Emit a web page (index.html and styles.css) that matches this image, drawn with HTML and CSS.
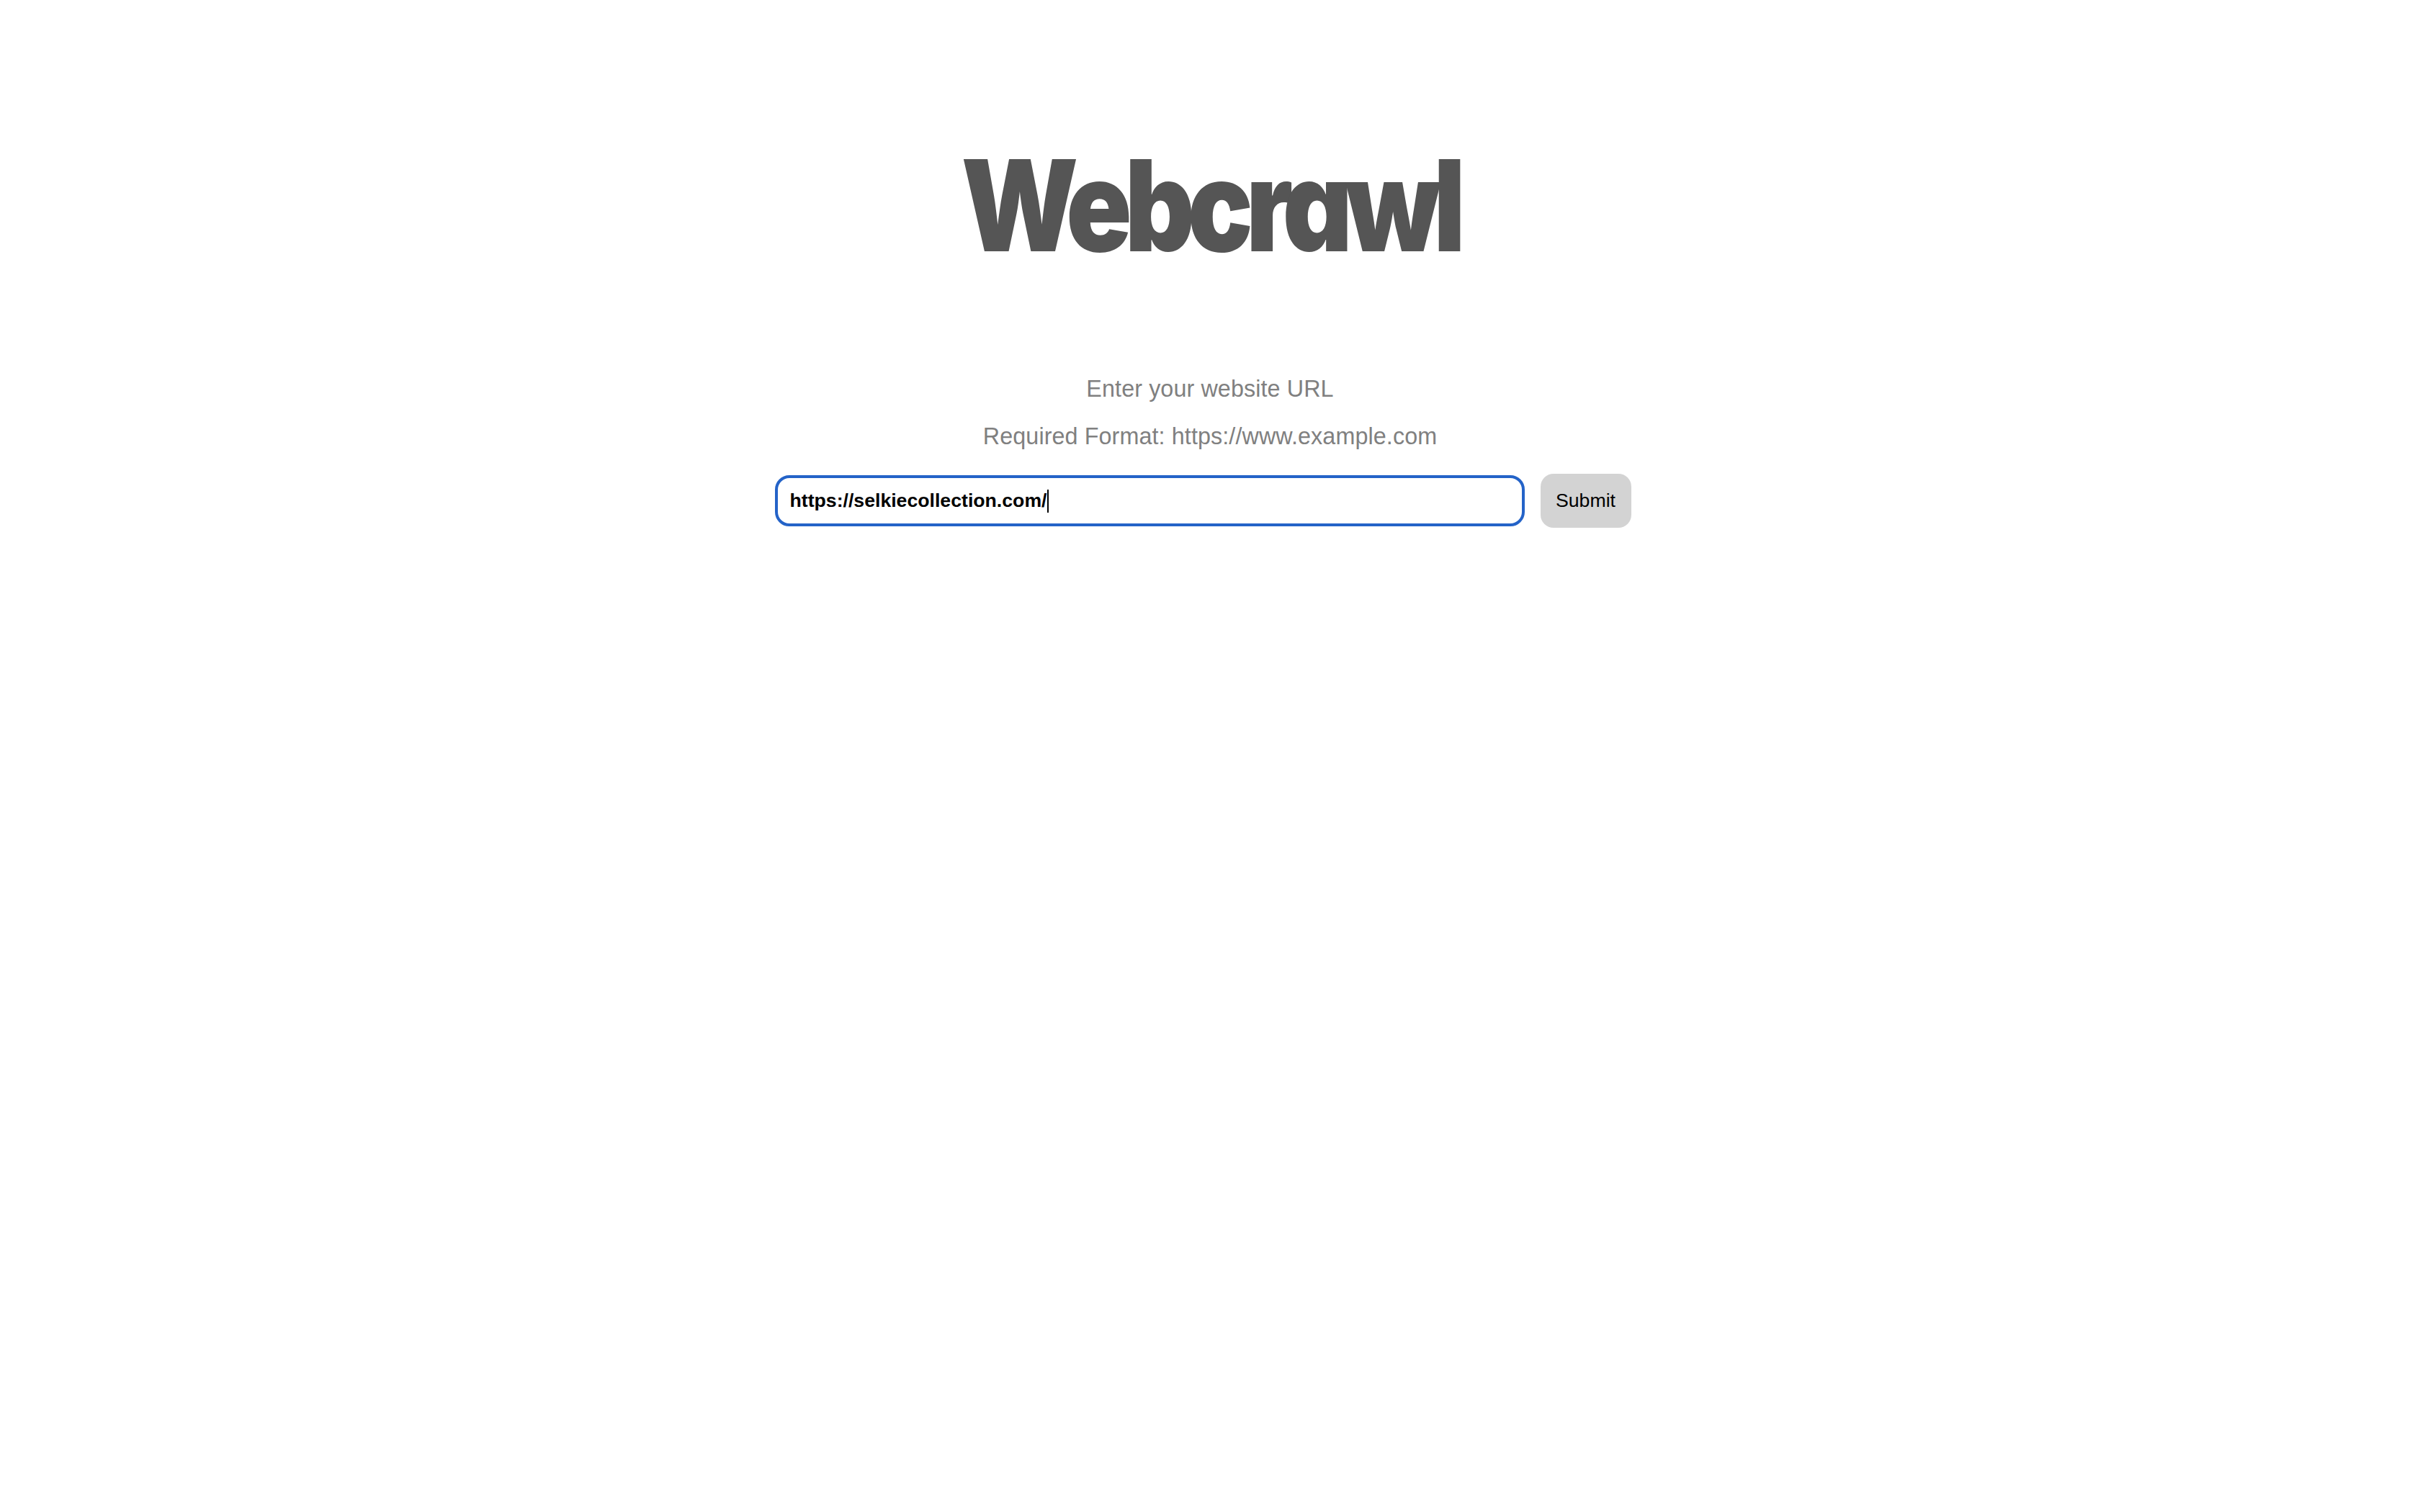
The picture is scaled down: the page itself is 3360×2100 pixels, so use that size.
FILE: index.html
```html
<!DOCTYPE html>
<html lang="en">
<head>
<meta charset="utf-8">
<title>Webcrawl</title>
<link rel="stylesheet" href="styles.css">
</head>
<body>
<main class="page">
  <h1 class="title">Webcrawl</h1>
  <p class="hint">Enter your website URL</p>
  <p class="hint hint-second">Required Format: https://www.example.com</p>
  <form class="url-form">
    <div class="url-field" role="textbox" aria-label="Website URL"><span class="url-text">https://selkiecollection.com/</span><span class="caret"></span></div>
    <button type="button" class="submit">Submit</button>
  </form>
</main>
</body>
</html>
```

FILE: styles.css
```css
html, body {
  margin: 0;
  padding: 0;
  background: #ffffff;
}

.page {
  display: flex;
  flex-direction: column;
  align-items: center;
  padding-top: 197px;
  font-family: "Liberation Sans", Arial, Helvetica, sans-serif;
}

.title {
  margin: 0;
  font-family: Inter, "Liberation Sans", sans-serif;
  font-weight: 900;
  font-size: 176px;
  line-height: 1;
  letter-spacing: -0.065em;
  color: #555555;
  font-feature-settings: "cv11" 1;
  transform: scaleX(0.855);
}

.hint {
  margin: 147px 0 0 0;
  font-size: 32.3px;
  line-height: 40px;
  letter-spacing: 0.1px;
  color: #808080;
}

.hint-second {
  margin-top: 26px;
}

.url-form {
  display: flex;
  align-items: center;
  gap: 22px;
  margin-top: 32px;
  padding-right: 20px;
}

.url-field {
  box-sizing: border-box;
  width: 1041px;
  height: 71px;
  border: 4px solid #2463c8;
  border-radius: 20px;
  padding: 0 17px;
  display: flex;
  align-items: center;
  font-family: "Liberation Sans", Arial, sans-serif;
  font-weight: 700;
  font-size: 26.67px;
  color: #000000;
}

.caret {
  display: inline-block;
  width: 2px;
  height: 32px;
  background: #000000;
  margin-left: 1px;
}

.submit {
  box-sizing: border-box;
  width: 126px;
  height: 75px;
  border: none;
  border-radius: 18px;
  background: #d3d3d3;
  font-family: "Liberation Sans", Arial, sans-serif;
  font-size: 26.67px;
  color: #000000;
  padding: 0;
}
```
